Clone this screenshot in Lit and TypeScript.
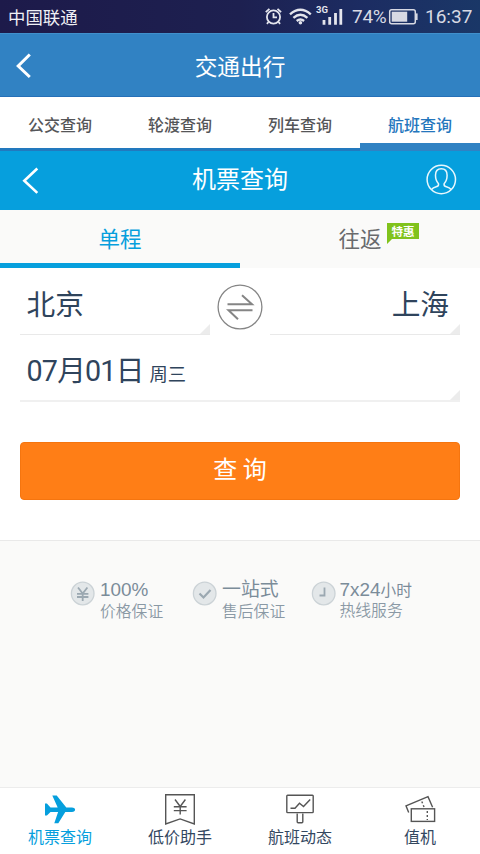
import { LitElement, html, svg, css } from "lit";
import { customElement } from "lit/decorators.js";
import { classMap } from "lit/directives/class-map.js";

const tabs = ["公交查询", "轮渡查询", "列车查询", "航班查询"];

const planeIcon = svg`<path fill="#069fdd" d="M45 803.5h1.9l3.6 4h7.2l-5.4-12h4.4l9.6 12h5.6q3.2.3 3.2 2.2t-3.2 2.2h-6.6l-7 11.3h-4l3.8-11.3h-7.6l-3.6 3.6h-1.9z"/>`;
const priceIcon = svg`<path d="M165.7 794.7h28.6v29.2l-14.2-5-14.4 5z"/><path d="M175 799.5l5.2 7 5.2-7M173.8 806.7h12.8M173.8 810.6h12.8M180.2 806.5v8"/>`;
const boardIcon = svg`<rect x="286.8" y="795.3" width="26.4" height="17.3" rx=".8"/><path d="M290.5 808.3h4.5l4.5-5 4 3.2 6.7-7M297.2 813.5v8.3q0 .9.9.9h3.8q.9 0 .9-.9v-8.3"/>`;
const ticketIcon = svg`<rect x="411.3" y="808.8" width="23.3" height="12.6"/><path d="M408.7 812.5L406 805.8l22-9.200 4.600 10.600"/><path stroke-dasharray="2 2" d="M427.300 811v9M421.800 801.500l2.400 6"/>`;

const navItems = [
  { label: "机票查询", icon: planeIcon, box: "40 790 40 36", active: true },
  { label: "低价助手", icon: priceIcon, box: "160 790 40 36", active: false },
  { label: "航班动态", icon: boardIcon, box: "280 790 40 36", active: false },
  { label: "值机", icon: ticketIcon, box: "400 790 40 36", active: false },
];

@customElement("app-root")
export class AppRoot extends LitElement {
  static styles = css`
    :host {
      display: flex;
      flex-direction: column;
      width: 480px;
      height: 854px;
      overflow: hidden;
      background: #fff;
      font-family: "Noto Sans CJK SC", sans-serif;
      color: #33475f;
    }
    * { box-sizing: border-box; }
    svg { display: block; flex: none; fill: none; }
    .status {
      display: flex;
      align-items: center;
      height: 33px;
      padding: 0 8px;
      color: #f0f0f5;
      background: linear-gradient(90deg, #1d1a4a 0%, #1d2050 50%, #1c2c62 75%, #1a3767 100%);
    }
    .carrier { font-size: 17.4px; line-height: 34px; }
    .signals { margin-left: auto; }
    .num { font: 400 19px/33px Roboto, sans-serif; color: #d7d9e3; }
    .pct { width: 36px; margin-left: 7px; letter-spacing: -0.3px; }
    .clock { margin-left: 6px; width: 47px; }
    .net { font: 700 9.5px Roboto, sans-serif; fill: #e4e5ed; }
    .bar {
      display: grid;
      grid-template-columns: 60px 1fr 60px;
      align-items: center;
      color: #fff;
      text-align: center;
    }
    .outer { height: 64px; background: #3182c3; border-top: 1px solid #4090cc; border-bottom: 1px solid #2670b8; }
    .outer .title { font-size: 22.7px; line-height: 64px; }
    .inner { height: 59px; background: #069fdd; }
    .inner .title { font-size: 24px; line-height: 54px; padding-bottom: 5px; }
    .tabs { display: flex; height: 54px; border-bottom: 3px solid #2279be; }
    .tab {
      flex: 1;
      font-size: 16px;
      font-weight: 500;
      line-height: 55px;
      text-align: center;
      color: #555659;
    }
    .tab.on { color: #2476bd; height: 54px; border-bottom: 8px solid #3182c3; }
    .trip { display: flex; height: 58px; background: #fafaf9; }
    .way {
      flex: 1;
      display: flex;
      justify-content: center;
      font-size: 21.5px;
      line-height: 55px;
      color: #696a6d;
      position: relative;
    }
    .way.on { color: #069fdd; border-bottom: 5px solid #069fdd; }
    .badge {
      position: absolute;
      left: 147px;
      top: 13px;
      width: 32px;
      height: 21px;
      background: #80c31c;
      clip-path: polygon(0 0, 100% 0, 100% 16px, 5px 16px, 0 100%);
      color: #fff;
      font-size: 11.5px;
      font-weight: 700;
      line-height: 16px;
      text-align: center;
    }
    .form { height: 272px; padding: 0 20px; }
    .cities { display: flex; height: 67px; }
    .field {
      position: relative;
      height: 67px;
      padding: 0 6.5px;
      border-bottom: 1px solid #e9e9e9;
      font-size: 28.7px;
      line-height: 69px;
      color: #2f445c;
    }
    .cities .field { width: 190px; }
    .field::after {
      content: "";
      position: absolute;
      right: 0;
      bottom: 0;
      width: 10px;
      height: 10px;
      background: #ececec;
      clip-path: polygon(100% 0, 100% 100%, 0 100%);
    }
    .cities .to { text-align: right; padding-right: 11px; }
    .swap { width: 60px; padding: 15px 6px; }
    .date { display: flex; border-bottom: 2px solid #f0f0f0; align-items: baseline; }
    .day { font: 400 28.7px/72px Roboto, "Noto Sans CJK SC", sans-serif; letter-spacing: -0.8px; }
    .week { font-size: 18.3px; margin-left: 6px; }
    .search {
      display: block;
      width: 440px;
      height: 58px;
      margin-top: 40px;
      padding: 0 0 6px;
      border: 1px solid #f5750f;
      border-radius: 4px;
      background: #ff7e16;
      color: #fff;
      font: 400 24px/50px "Noto Sans CJK SC", sans-serif;
    }
    .lower { flex: 1; background: #fafaf9; border-top: 1px solid #e9e9e9; padding: 38px 0 0 70px; }
    .perks { display: flex; }
    .perk { display: flex; gap: 5px; width: 122px; color: #8a99a5; white-space: nowrap; }
    .perk:nth-child(2) { width: 118.5px; }
    .perk:nth-child(3) { gap: 4px; }
    .perk:nth-child(3) .sub { line-height: 16px; }
    .perk svg { margin-top: 2px; }
    .big { font: 400 18.9px/22px "Liberation Sans", "Noto Sans CJK SC", sans-serif; color: #7b8c99; }
    .big small { font-size: 15.7px; }
    .sub { font-size: 15.8px; line-height: 20px; font-weight: 350; }
    .nav { display: flex; height: 67px; border-top: 1px solid #ececec; background: #fff; }
    .item {
      flex: 1;
      display: flex;
      flex-direction: column;
      align-items: center;
      padding-top: 2px;
      font-size: 16px;
      line-height: 20px;
      color: #33475f;
    }
    .item svg { stroke: #555; stroke-width: 1.4; }
    .item.on { color: #069fdd; }
    .item.on svg { stroke: none; }
  `;

  private perk(mark: unknown, big: unknown, sub: string) {
    return html`<div class="perk">
      <svg width="25" height="25" stroke="#9ba8b1" stroke-width="1.8">
        <circle cx="12.7" cy="12.5" r="11.3" fill="#e3e7e9" stroke="#cbd2d6" stroke-width="1.3" />${mark}
      </svg>
      <div><div class="big">${big}</div><div class="sub">${sub}</div></div>
    </div>`;
  }

  render() {
    return html`
      <div class="status">
        <span class="carrier">中国联通</span>
        <svg class="signals" width="80" height="33" stroke="#e4e5ed" stroke-width="1.8">
          <circle cx="8.5" cy="17" r="6.6" />
          <path d="M8.5 13v4.3h3.5M.8 12.2l3.600-3.400M12.500 8.800l3.600 3.400M3.500 22l-1.600 1.800M13.500 22l1.600 1.800" />
          <path stroke-width="2.4" d="M25 14.3q10.400-9 20.800 0M28.400 17.800q7-6 14 0M31.700 21q3.700-3 7.400 0" />
          <circle cx="35.4" cy="22.800" r="1.800" fill="#e4e5ed" stroke="none" />
          <text class="net" x="51" y="12.500" stroke="none">3G</text>
          <path stroke-width="2.800" d="M59 20v4.700M64.700 17v7.700M70.500 13v11.700M75.800 9v15.700" />
        </svg>
        <span class="num pct">74%</span>
        <svg width="31" height="33" stroke="#d7d9e3" stroke-width="1.5">
          <rect x="1.7" y="9.7" width="25.6" height="14" rx="2" />
          <rect x="3.7" y="11.7" width="15.500" height="10" fill="#d7d9e3" stroke="none" />
          <path stroke-width="2" d="M28.6 13.4v6.6" />
        </svg>
        <span class="num clock">16:37</span>
      </div>

      <div class="bar outer">
        <svg width="60" height="62"><path d="M29.8 19.5L18.2 31l11.6 11" stroke="#fff" stroke-width="3" /></svg>
        <span class="title">交通出行</span>
      </div>

      <div class="tabs">
        ${tabs.map((t, i) => html`<div class=${classMap({ tab: true, on: i === 3 })}>${t}</div>`)}
      </div>

      <div class="bar inner">
        <svg width="60" height="58"><path d="M37.3 16.500L24.300 28.700l13 12.200" stroke="#fff" stroke-width="2.600" /></svg>
        <span class="title">机票查询</span>
        <svg width="60" height="58" stroke="#e8f7fd" stroke-width="1.5">
          <circle cx="21.3" cy="27.5" r="14.2" />
          <path d="M11.5 37.5q1.500-1.800 4.700-2.700 2.800-.800 2.300-3-3-3.200-3-8.500 0-6.500 5.800-6.500t5.800 6.500q0 5.300-3 8.500-.500 2.200 2.300 3 3.200.900 4.700 2.700" />
        </svg>
      </div>

      <div class="trip">
        <div class="way on">单程</div>
        <div class="way">往返<span class="badge">特惠</span></div>
      </div>

      <div class="form">
        <div class="cities">
          <div class="field">北京</div>
          <div class="swap">
            <svg width="48" height="48" stroke="#858585">
              <circle cx="24" cy="24" r="21.9" stroke-width="1.3" />
              <path stroke-width="2" d="M11.5 21.3h24.5l-10-9M36.5 27.3H12.5l9.5 9" />
            </svg>
          </div>
          <div class="field to">上海</div>
        </div>
        <div class="field date"><span class="day">07月01日</span><span class="week">周三</span></div>
        <button class="search">查 询</button>
      </div>

      <div class="lower">
        <div class="perks">
          ${this.perk(svg`<path d="M8 6.5l4.7 6 4.7-6M7 12.8h11.4M7 16h11.4M12.7 12.5v7.5"/>`, "100%", "价格保证")}
          ${this.perk(svg`<path d="M7.5 12.5l4 4 7-7.5" stroke-width="2.2"/>`, "一站式", "售后保证")}
          ${this.perk(svg`<path d="M13.5 6.5v8H8.5"/>`, html`7x24<small>小时</small>`, "热线服务")}
        </div>
      </div>

      <div class="nav">
        ${navItems.map(
          (n) => html`<div class=${classMap({ item: true, on: n.active })}>
            <svg width="40" height="36" viewBox=${n.box}>${n.icon}</svg>${n.label}
          </div>`
        )}
      </div>
    `;
  }
}
